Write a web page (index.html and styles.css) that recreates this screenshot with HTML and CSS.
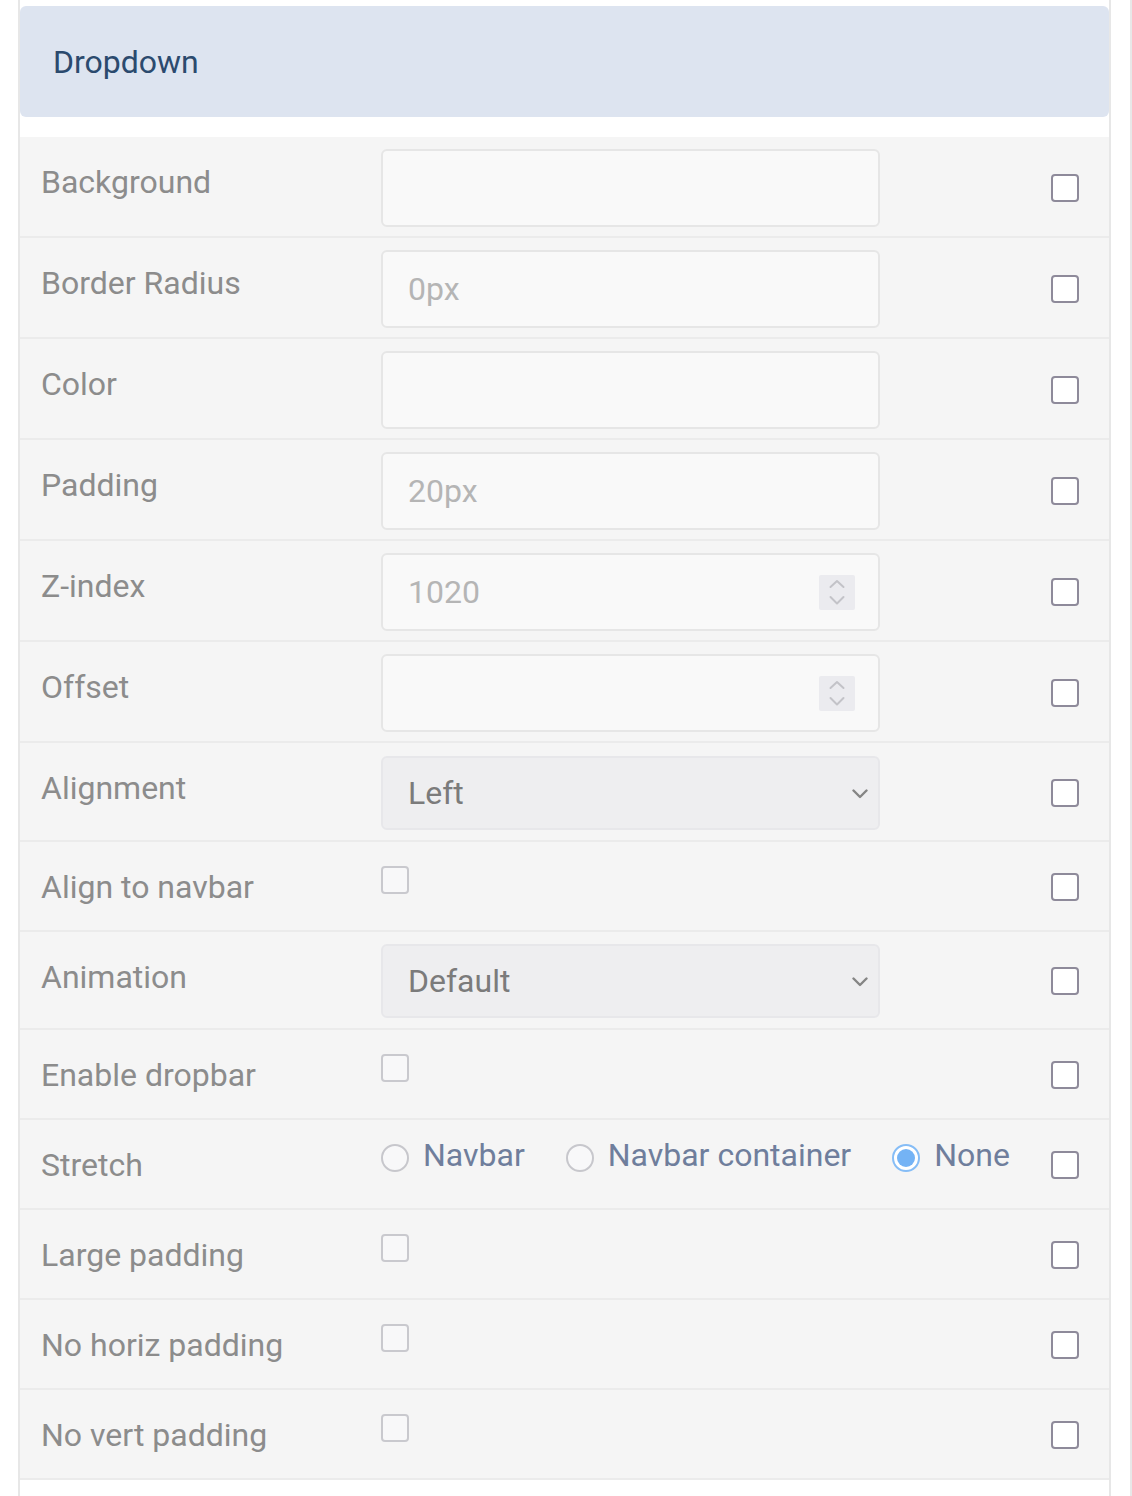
FILE: index.html
```html
<!DOCTYPE html>
<html lang="en">
<head>
<meta charset="utf-8">
<title>Dropdown</title>
<link rel="stylesheet" href="styles.css">
</head>
<body>
<div class="page">
  <div class="panel">
    <div class="panel-head">Dropdown</div>

    <div class="row row-input">
      <div class="label">Background</div>
      <div class="control"><input class="field" type="text"></div>
      <input class="cb-right" type="checkbox">
    </div>

    <div class="row row-input">
      <div class="label">Border Radius</div>
      <div class="control"><input class="field" type="text" placeholder="0px"></div>
      <input class="cb-right" type="checkbox">
    </div>

    <div class="row row-input">
      <div class="label">Color</div>
      <div class="control"><input class="field" type="text"></div>
      <input class="cb-right" type="checkbox">
    </div>

    <div class="row row-input">
      <div class="label">Padding</div>
      <div class="control"><input class="field" type="text" placeholder="20px"></div>
      <input class="cb-right" type="checkbox">
    </div>

    <div class="row row-input">
      <div class="label">Z-index</div>
      <div class="control">
        <div class="field num">
          <input class="num-input" type="text" placeholder="1020">
          <span class="spinner">
            <svg width="36" height="35" viewBox="0 0 36 35"><polyline points="11.5,12 18,6 24.5,12" fill="none" stroke="#c3c3c8" stroke-width="2" stroke-linecap="round" stroke-linejoin="round"/><polyline points="11.5,22 18,28.5 24.5,22" fill="none" stroke="#c3c3c8" stroke-width="2" stroke-linecap="round" stroke-linejoin="round"/></svg>
          </span>
        </div>
      </div>
      <input class="cb-right" type="checkbox">
    </div>

    <div class="row row-input">
      <div class="label">Offset</div>
      <div class="control">
        <div class="field num">
          <input class="num-input" type="text">
          <span class="spinner">
            <svg width="36" height="35" viewBox="0 0 36 35"><polyline points="11.5,12 18,6 24.5,12" fill="none" stroke="#c3c3c8" stroke-width="2" stroke-linecap="round" stroke-linejoin="round"/><polyline points="11.5,22 18,28.5 24.5,22" fill="none" stroke="#c3c3c8" stroke-width="2" stroke-linecap="round" stroke-linejoin="round"/></svg>
          </span>
        </div>
      </div>
      <input class="cb-right" type="checkbox">
    </div>

    <div class="row row-select first">
      <div class="label">Alignment</div>
      <div class="control">
        <div class="select">
          <span class="select-text">Left</span>
          <svg class="caret" width="16" height="10" viewBox="0 0 16 10"><polyline points="1.5,1.5 8,8 14.5,1.5" fill="none" stroke="#858585" stroke-width="2.4" stroke-linecap="round" stroke-linejoin="round"/></svg>
        </div>
      </div>
      <input class="cb-right" type="checkbox">
    </div>

    <div class="row row-check">
      <div class="label">Align to navbar</div>
      <div class="control"><input class="cb-inline" type="checkbox"></div>
      <input class="cb-right" type="checkbox">
    </div>

    <div class="row row-select">
      <div class="label">Animation</div>
      <div class="control">
        <div class="select">
          <span class="select-text">Default</span>
          <svg class="caret" width="16" height="10" viewBox="0 0 16 10"><polyline points="1.5,1.5 8,8 14.5,1.5" fill="none" stroke="#858585" stroke-width="2.4" stroke-linecap="round" stroke-linejoin="round"/></svg>
        </div>
      </div>
      <input class="cb-right" type="checkbox">
    </div>

    <div class="row row-check">
      <div class="label">Enable dropbar</div>
      <div class="control"><input class="cb-inline" type="checkbox"></div>
      <input class="cb-right" type="checkbox">
    </div>

    <div class="row row-check">
      <div class="label">Stretch</div>
      <div class="control radios">
        <label class="radio"><span class="circle"></span><span class="radio-text">Navbar</span></label>
        <label class="radio"><span class="circle"></span><span class="radio-text">Navbar container</span></label>
        <label class="radio"><span class="circle on"></span><span class="radio-text">None</span></label>
      </div>
      <input class="cb-right" type="checkbox">
    </div>

    <div class="row row-check">
      <div class="label">Large padding</div>
      <div class="control"><input class="cb-inline" type="checkbox"></div>
      <input class="cb-right" type="checkbox">
    </div>

    <div class="row row-check">
      <div class="label">No horiz padding</div>
      <div class="control"><input class="cb-inline" type="checkbox"></div>
      <input class="cb-right" type="checkbox">
    </div>

    <div class="row row-check">
      <div class="label">No vert padding</div>
      <div class="control"><input class="cb-inline" type="checkbox"></div>
      <input class="cb-right" type="checkbox">
    </div>
  </div>
</div>
</body>
</html>
```

FILE: styles.css
```css
html, body {
  margin: 0;
  padding: 0;
  background: #ffffff;
}

body {
  font-family: Roboto, "Liberation Sans", Arial, sans-serif;
  font-size: 32px;
}

.page {
  width: 1132px;
  min-height: 1496px;
  box-sizing: border-box;
  border-right: 2px solid #e8e8e8;
}

.panel {
  margin-left: 18px;
  width: 1093px;
  min-height: 1496px;
  box-sizing: border-box;
  border-left: 2px solid #e7e7e7;
  border-right: 2px solid #e7e7e7;
  padding-top: 6px;
}

.panel-head {
  height: 111px;
  box-sizing: border-box;
  background: #dde4f0;
  border-radius: 6px;
  padding-left: 33px;
  display: flex;
  align-items: center;
  color: #2b4a6e;
  font-size: 32px;
  margin-bottom: 20px;
}

.row {
  display: flex;
  align-items: flex-start;
  box-sizing: border-box;
  padding: 12px 30px 10px 21px;
  background: #f5f5f5;
  border-bottom: 2px solid #ebebeb;
}

.row-input { height: 101px; }
.row-select { height: 98px; }
.row-select.first { height: 99px; padding-top: 13px; }
.row-check { height: 90px; }

.label {
  flex: none;
  width: 340px;
  margin-top: 9px;
  line-height: 48px;
  color: #8c8c8c;
  white-space: nowrap;
}

.row-select.first .label { margin-top: 8px; }

.control {
  flex: 1;
  display: flex;
  align-items: flex-start;
}

.field {
  width: 499px;
  height: 78px;
  box-sizing: border-box;
  border: 2px solid #e6e6e6;
  border-radius: 6px;
  background: #f9f9f9;
  padding: 0 25px;
  margin: 0;
  font-family: inherit;
  font-size: 32px;
  color: #999;
  outline: none;
}

.field::placeholder,
.num-input::placeholder {
  color: #b5b5b5;
  opacity: 1;
}

.field.num {
  display: flex;
  align-items: center;
  padding: 0 23px 0 25px;
}

.num-input {
  flex: 1;
  min-width: 0;
  border: none;
  background: transparent;
  padding: 0;
  margin: 0;
  font-family: inherit;
  font-size: 32px;
  color: #999;
  outline: none;
}

.spinner {
  flex: none;
  width: 36px;
  height: 35px;
  background: #ebebef;
  border-radius: 2px;
  display: flex;
}

.select {
  width: 499px;
  height: 74px;
  box-sizing: border-box;
  border: 2px solid #e7e7ea;
  border-radius: 6px;
  background: #eeeef0;
  display: flex;
  align-items: center;
  padding: 0 10px 0 25px;
}

.select-text {
  flex: 1;
  color: #7b7b7b;
}

.caret {
  flex: none;
  margin-top: 2px;
}

input[type="checkbox"] {
  -webkit-appearance: none;
  appearance: none;
  margin: 0;
  width: 28px;
  height: 28px;
  box-sizing: border-box;
  border-radius: 4px;
}

.cb-right {
  flex: none;
  align-self: center;
  border: 2px solid #8e8a9a;
  background: #ffffff;
}

.cb-inline {
  margin-top: 12px !important;
  border: 2px solid #c9c9ce;
  background: #f8f8f9;
}

.radios {
  margin-top: -1px;
}

.radio {
  display: inline-flex;
  align-items: flex-start;
  margin-right: 41px;
  white-space: nowrap;
}

.circle {
  flex: none;
  width: 28px;
  height: 28px;
  box-sizing: border-box;
  border: 2px solid #c7c7cc;
  border-radius: 50%;
  background: #f8f8f9;
  margin-top: 13px;
  display: flex;
  align-items: center;
  justify-content: center;
}

.circle.on {
  border-color: #86bdf6;
  background: #ffffff;
}

.circle.on::after {
  content: "";
  width: 18px;
  height: 18px;
  border-radius: 50%;
  background: #74b3f5;
}

.radio-text {
  margin-left: 14px;
  line-height: 48px;
  color: #6f7e9c;
}
```
